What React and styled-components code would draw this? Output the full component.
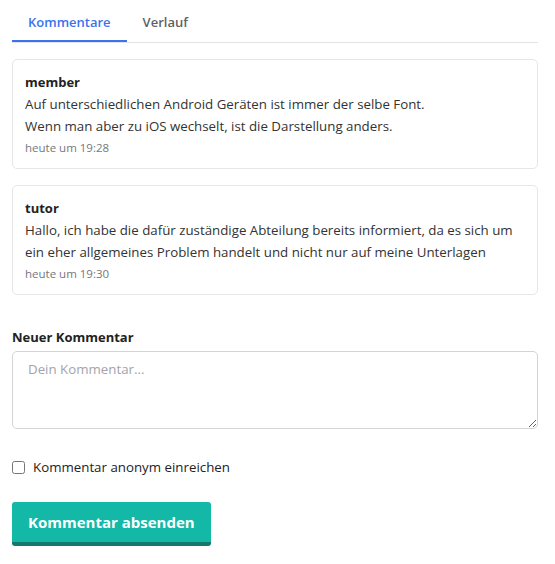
import React from "react";
import styled, { createGlobalStyle } from "styled-components";

const Global = createGlobalStyle`
  body { margin: 0; background: #fff; font-family: "Open Sans", "Noto Sans", sans-serif; color: #212529; }
  * { box-sizing: border-box; }
`;

const Page = styled.div`
  padding: 0 17px 0 12px;
  display: flex;
  flex-direction: column;
`;

const Tabs = styled.div`
  display: flex;
  border-bottom: 1px solid #e3e3e3;
  height: 43px;
  margin-bottom: 16px;
`;

const Tab = styled.div`
  padding: 3px 16px 0;
  height: 42px;
  display: flex;
  align-items: center;
  font-size: 13px;
  font-weight: 600;
  color: ${(p) => (p.$active ? "#3b73ec" : "#5f5f66")};
  border-bottom: 2px solid ${(p) => (p.$active ? "#3b73ec" : "transparent")};
  margin-bottom: -1px;
`;

const Card = styled.div`
  border: 1px solid #e6e6e6;
  border-radius: 5px;
  padding: 11px 12px 9px;
  margin-bottom: 16px;
`;

const Author = styled.div`
  font-size: 13px;
  font-weight: 700;
  color: #222;
  line-height: 22px;
`;

const Body = styled.div`
  font-size: 13.3px;
  line-height: 22px;
  color: #333;
`;

const Time = styled.div`
  font-size: 11.5px;
  color: #777;
  line-height: 22px;
`;

const Label = styled.div`
  margin-top: 15px;
  font-size: 13px;
  font-weight: 700;
  color: #222;
  line-height: 22px;
`;

const TextArea = styled.textarea`
  margin-top: 3px;
  width: 100%;
  height: 78px;
  border: 1px solid #d4d4d8;
  border-radius: 5px;
  padding: 8px 15px;
  font-family: inherit;
  font-size: 13.3px;
  resize: vertical;
  &::placeholder { color: #a3a3ad; }
`;

const CheckRow = styled.label`
  margin-top: 29px;
  display: flex;
  align-items: center;
  gap: 8px;
  font-size: 13.3px;
  color: #222;
`;

const Box = styled.input`
  margin: 0;
  width: 13px;
  height: 13px;
`;

const Button = styled.button`
  margin-top: 26px;
  align-self: flex-start;
  background: #14b8a6;
  color: #fff;
  border: none;
  border-bottom: 4px solid #117a6c;
  border-radius: 3px;
  height: 44px;
  padding: 0 16px;
  font-family: inherit;
  font-size: 15px;
  font-weight: 700;
`;

export default function App() {
  return (
    <>
      <Global />
      <Page>
        <Tabs>
          <Tab $active>Kommentare</Tab>
          <Tab>Verlauf</Tab>
        </Tabs>
        <Card>
          <Author>member</Author>
          <Body>
            Auf unterschiedlichen Android Geräten ist immer der selbe Font.
            <br />
            Wenn man aber zu iOS wechselt, ist die Darstellung anders.
          </Body>
          <Time>heute um 19:28</Time>
        </Card>
        <Card>
          <Author>tutor</Author>
          <Body>
            Hallo, ich habe die dafür zuständige Abteilung bereits informiert, da es sich um ein eher allgemeines Problem handelt und nicht nur auf meine Unterlagen
          </Body>
          <Time>heute um 19:30</Time>
        </Card>
        <Label>Neuer Kommentar</Label>
        <TextArea placeholder="Dein Kommentar..." />
        <CheckRow>
          <Box type="checkbox" />
          Kommentar anonym einreichen
        </CheckRow>
        <Button>Kommentar absenden</Button>
      </Page>
    </>
  );
}
